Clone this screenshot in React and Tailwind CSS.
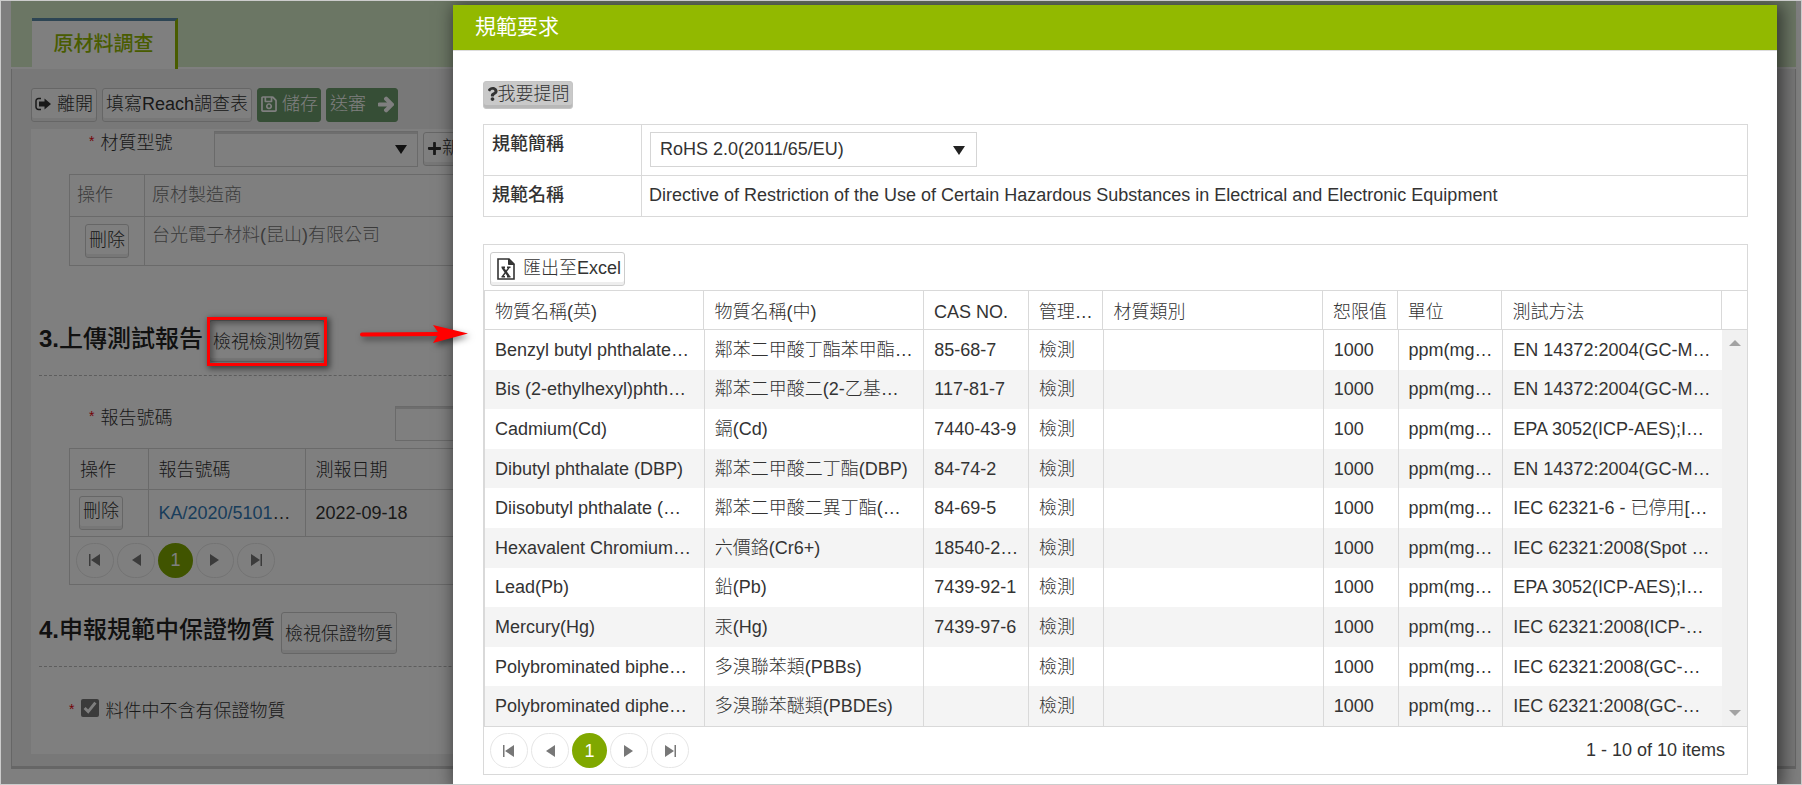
import React from "react";
import clsx from "clsx";
import { FaArrowRight, FaPlus, FaQuestion, FaRegSave } from "react-icons/fa";

const substances = [
  ["Benzyl butyl phthalate…", "鄰苯二甲酸丁酯苯甲酯…", "85-68-7", "檢測", "", "1000", "ppm(mg…", "EN 14372:2004(GC-M…"],
  ["Bis (2-ethylhexyl)phth…", "鄰苯二甲酸二(2-乙基…", "117-81-7", "檢測", "", "1000", "ppm(mg…", "EN 14372:2004(GC-M…"],
  ["Cadmium(Cd)", "鎘(Cd)", "7440-43-9", "檢測", "", "100", "ppm(mg…", "EPA 3052(ICP-AES);I…"],
  ["Dibutyl phthalate (DBP)", "鄰苯二甲酸二丁酯(DBP)", "84-74-2", "檢測", "", "1000", "ppm(mg…", "EN 14372:2004(GC-M…"],
  ["Diisobutyl phthalate (…", "鄰苯二甲酸二異丁酯(…", "84-69-5", "檢測", "", "1000", "ppm(mg…", "IEC 62321-6 - 已停用[…"],
  ["Hexavalent Chromium…", "六價鉻(Cr6+)", "18540-2…", "檢測", "", "1000", "ppm(mg…", "IEC 62321:2008(Spot …"],
  ["Lead(Pb)", "鉛(Pb)", "7439-92-1", "檢測", "", "1000", "ppm(mg…", "EPA 3052(ICP-AES);I…"],
  ["Mercury(Hg)", "汞(Hg)", "7439-97-6", "檢測", "", "1000", "ppm(mg…", "IEC 62321:2008(ICP-…"],
  ["Polybrominated biphe…", "多溴聯苯類(PBBs)", "", "檢測", "", "1000", "ppm(mg…", "IEC 62321:2008(GC-…"],
  ["Polybrominated diphe…", "多溴聯苯醚類(PBDEs)", "", "檢測", "", "1000", "ppm(mg…", "IEC 62321:2008(GC-…"],
];

const headers = ["物質名稱(英)", "物質名稱(中)", "CAS NO.", "管理…", "材質類別", "恕限值", "單位", "測試方法"];

// minimum widths, the fixed table layout scales them up in proportion
const GridColumns = () => (
  <colgroup>
    <col className="w-[88px]" />
    <col className="w-[88px]" />
    <col className="w-[42px]" />
    <col className="w-[30px]" />
    <col className="w-[88px]" />
    <col className="w-[30px]" />
    <col className="w-[42px]" />
    <col className="w-[88px]" />
  </colgroup>
);

const Button = ({ className, children, ...props }) => (
  <button
    type="button"
    className={clsx(
      "flex shrink-0 items-center whitespace-nowrap rounded-[3px] border leading-6",
      className
    )}
    {...props}
  >
    {children}
  </button>
);

const plain = "border-[#ccc] bg-white shadow-[inset_0_-3px_0_#eee]";
const green = "border-[#6c9c6c] bg-[#6c9c6c] text-white";

const DownTriangle = ({ className }) => (
  <svg viewBox="0 0 12 9" className={clsx("pointer-events-none absolute h-[9px] w-3", className)}>
    <path d="M0 0h12L6 9z" fill="#222" />
  </svg>
);

const SignOutIcon = () => (
  <svg viewBox="0 0 16 14" className="h-[14px] w-4">
    <path d="M6 1.500H3.500a2.500 2.500 0 0 0-2.500 2.500v6a2.500 2.500 0 0 0 2.500 2.500H6" fill="none" stroke="#333" strokeWidth="1.5" />
    <path d="M4 4.500h5.500V1.500L16 7l-6.500 5.500V9.500H4z" fill="#333" />
  </svg>
);

const ExcelIcon = () => (
  <svg viewBox="0 0 18 22" className="h-[22px] w-[18px]">
    <path d="M1 1h11l5 5v15H1z" fill="none" stroke="#333" strokeWidth="1.6" />
    <path d="M11.500 1v5.500H17z" fill="#333" stroke="#333" />
    <path d="M5.500 9.500l6.500 9" stroke="#333" strokeWidth="2.2" />
    <path d="M12 9.500l-6.500 9" stroke="#333" strokeWidth="1.4" />
    <path d="M4.500 9.300H8M10 9.300h3.500M4.500 18.700H8M10 18.700h3.500" stroke="#333" strokeWidth="1.4" />
  </svg>
);

const pagerButtons = [
  { label: "第一頁", d: "M0 0h1.500v12H0zM11 0v12L2 6z" },
  { label: "上一頁", d: "M11 0v12L2 6z" },
  { label: "1" },
  { label: "下一頁", d: "M1 0v12l9-6z" },
  { label: "最後一頁", d: "M1 0v12l9-6zM10.500 0H12v12h-1.500z" },
];

const Pager = () => (
  <div className="flex items-center gap-[3px]">
    {pagerButtons.map(({ label, d }) =>
      d ? (
        <button
          key={label}
          type="button"
          aria-label={label}
          className="flex h-[35px] w-[38px] items-center justify-center rounded-full border border-[#e6e6e6] bg-white"
        >
          <svg viewBox="0 0 12 12" className="h-3 w-3">
            <path d={d} fill="#777" />
          </svg>
        </button>
      ) : (
        <button key={label} type="button" className="h-[35px] w-[35px] rounded-full bg-[#80a800] text-white">
          {label}
        </button>
      )
    )}
  </div>
);

const Label = ({ htmlFor, children }) => (
  <label htmlFor={htmlFor} className="flex gap-[6px] leading-6">
    <span className="text-sm leading-5 text-red-600">*</span>
    {children}
  </label>
);

const SectionTitle = ({ number, children }) => (
  <h2 className="text-2xl font-medium leading-9 text-[#222]">
    <span className="font-bold">{number}.</span>
    {children}
  </h2>
);

const SurveyPage = () => (
  <div className="h-full bg-white pl-[10px] pr-[5px]">
    <div className="h-[68px] border-b-2 border-white bg-[#d6ecc8] pl-[21px] pt-[17px]">
      <a
        href="#material"
        className="flex h-[51px] w-[146px] items-center justify-center border-r-[3px] border-t-[3px] border-r-[#92b900] border-t-[#5b8aa8] bg-white pb-[2px] text-xl font-medium text-[#92b900]"
      >
        原材料調查
      </a>
    </div>

    <div className="border-x border-b-[3px] border-[#ccc] bg-[#f0f0f0] pb-3 pl-[19px] pr-5 pt-[19px]">
      <div className="flex gap-[5px]">
        <Button className={clsx(plain, "h-[34px] w-[66px] justify-center gap-[6px] pb-[2px]")}>
          <SignOutIcon />
          離開
        </Button>
        <Button className={clsx(plain, "h-[34px] w-[150px] justify-center pb-[2px]")}>填寫Reach調查表</Button>
        <Button className={clsx(green, "h-[34px] w-16 justify-center gap-1 pb-[2px]")}>
          <FaRegSave className="h-[18px] w-[18px]" />
          儲存
        </Button>
        <Button className={clsx(green, "h-[34px] w-[72px] justify-center gap-3 pb-[2px]")}>
          送審
          <FaArrowRight className="h-[17px] w-4" stroke="currentColor" strokeWidth="45" />
        </Button>
      </div>

      <div className="mt-[7px] h-[625px] bg-white pl-2">
        <div className="flex pl-[50px] pt-[2px]">
          <div className="w-[125px]">
            <Label htmlFor="model">材質型號</Label>
          </div>
          <div className="relative mr-[5px]">
            <select
              id="model"
              className="h-9 w-[204px] appearance-none border border-[#d5d5d5] bg-white shadow-[inset_0_2px_0_#ddd]"
            />
            <DownTriangle className="right-[11px] top-[14px]" />
          </div>
          <Button className={clsx(plain, "mt-px h-[34px] w-[60px] pb-[2px] pl-[3px]")}>
            <FaPlus className="h-[15px] w-[15px]" />
            新增
          </Button>
        </div>

        <table className="ml-[30px] mt-[7px] w-[1600px] table-fixed border-collapse text-left text-[#777]">
          <colgroup>
            <col className="w-[75px]" />
            <col />
          </colgroup>
          <thead>
            <tr className="h-[42px]">
              <th className="border border-[#d5d5d5] pb-[2px] pl-[7px] font-light">操作</th>
              <th className="border border-[#d5d5d5] pb-[2px] pl-[7px] font-light">原材製造商</th>
            </tr>
          </thead>
          <tbody>
            <tr className="h-[49px]">
              <td className="border border-[#d5d5d5] pl-[15px]">
                <Button className={clsx(plain, "h-[34px] w-11 justify-center pb-[3px] text-[#333]")}>刪除</Button>
              </td>
              <td className="border border-[#d5d5d5] pb-3 pl-[7px]">台光電子材料(昆山)有限公司</td>
            </tr>
          </tbody>
        </table>

        <section className="mt-[51px]">
          <div className="flex h-[59px] gap-[6px] border-b border-dashed border-[#bbb]">
            <div className="pt-1">
              <SectionTitle number={3}>上傳測試報告</SectionTitle>
            </div>
            <Button className={clsx(plain, "mt-[3px] h-[42px] w-[116px] justify-center pt-[2px]")}>檢視檢測物質</Button>
          </div>
          <div className="flex pl-[50px] pt-[30px]">
            <div className="w-[306px]">
              <Label htmlFor="report">報告號碼</Label>
            </div>
            <input id="report" className="h-[35px] w-[300px] border border-[#d5d5d5] shadow-[inset_0_2px_0_#ddd]" />
          </div>
          <div className="ml-[30px] mt-[7px] w-[1600px] border border-[#d5d5d5]">
            <table className="w-full table-fixed border-collapse text-left">
              <colgroup>
                <col className="w-[78px]" />
                <col className="w-[157px]" />
                <col />
              </colgroup>
              <thead>
                <tr className="h-10 border-b border-[#d5d5d5]">
                  <th className="border-r border-[#d5d5d5] pl-[10px] pt-[2px] font-light">操作</th>
                  <th className="border-r border-[#d5d5d5] pl-[10px] pt-[2px] font-light">報告號碼</th>
                  <th className="pl-[10px] pt-[2px] font-light">測報日期</th>
                </tr>
              </thead>
              <tbody>
                <tr className="h-[47px] border-b border-[#d5d5d5]">
                  <td className="border-r border-[#d5d5d5] pl-[9px]">
                    <Button className={clsx(plain, "h-[34px] w-11 justify-center pb-[3px]")}>刪除</Button>
                  </td>
                  <td className="border-r border-[#d5d5d5] pl-[10px]">
                    <a href="#report-file" className="text-[#337ab7]">
                      KA/2020/5101
                    </a>
                    …
                  </td>
                  <td className="pl-[10px]">2022-09-18</td>
                </tr>
              </tbody>
            </table>
            <div className="py-[6px] pl-[6px]">
              <Pager />
            </div>
          </div>
        </section>

        <section className="mt-[27px]">
          <div className="flex h-[55px] gap-[6px] border-b border-dashed border-[#bbb]">
            <SectionTitle number={4}>申報規範中保證物質</SectionTitle>
            <Button className={clsx(plain, "h-[42px] w-[116px] justify-center pt-[2px]")}>檢視保證物質</Button>
          </div>
          <div className="flex items-start pl-[30px] pt-8">
            <span className="mr-[7px] text-sm leading-5 text-red-600">*</span>
            <input id="none" type="checkbox" defaultChecked className="mr-[6px] h-[18px] w-[18px] accent-[#767676]" />
            <label htmlFor="none" className="leading-6">
              料件中不含有保證物質
            </label>
          </div>
        </section>
      </div>
    </div>
  </div>
);

const SpecDialog = () => (
  <div
    role="dialog"
    aria-labelledby="spec-title"
    className="min-w-0 flex-1 bg-white shadow-[3px_3px_16px_3px_rgba(0,0,0,0.5)]"
  >
    <div
      id="spec-title"
      className="flex h-[46px] items-center border-b border-[#ddd] bg-[#92b900] pb-[2px] pl-[22px] text-[21px] font-normal text-white"
    >
      規範要求
    </div>

    <div className="pb-[10px] pl-[30px] pr-[29px] pt-[30px]">
      <Button className="h-7 w-[90px] justify-center border-[#c5c5c5] bg-[#c9c9c9] pb-[3px] shadow-[inset_0_-3px_0_#b8b8b8]">
        <FaQuestion className="h-[14px] w-[11px]" />
        我要提問
      </Button>

      <table className="mt-[15px] w-full table-fixed border-collapse text-left">
        <colgroup>
          <col className="w-[158px]" />
          <col />
        </colgroup>
        <tbody>
          <tr className="h-[51px]">
            <th className="border border-[#d9d9d9] pl-2 pt-[7px] align-top font-medium leading-6">
              <label htmlFor="spec">規範簡稱</label>
            </th>
            <td className="border border-[#d9d9d9] pb-[2px] pl-2">
              <div className="relative w-[327px]">
                <select
                  id="spec"
                  className="block h-[35px] w-full appearance-none border border-[#d5d5d5] bg-white pl-[9px]"
                >
                  <option>RoHS 2.0(2011/65/EU)</option>
                </select>
                <DownTriangle className="right-3 top-[14px]" />
              </div>
            </td>
          </tr>
          <tr className="h-[41px]">
            <th className="border border-[#d9d9d9] pl-2 pt-[7px] align-top font-medium leading-6">規範名稱</th>
            <td className="border border-[#d9d9d9] pb-[2px] pl-[7px]">
              Directive of Restriction of the Use of Certain Hazardous Substances in Electrical and Electronic Equipment
            </td>
          </tr>
        </tbody>
      </table>

      <div className="mt-[27px] border border-[#d9d9d9]">
        <div className="h-[45px] pl-[6px] pt-[7px]">
          <Button className={clsx(plain, "h-[34px] w-[135px] gap-2 pl-[6px]")}>
            <ExcelIcon />
            <span className="pb-[2px]">匯出至Excel</span>
          </Button>
        </div>

        <div className="border-y border-[#d9d9d9] pr-[25px]">
          <table className="w-full table-fixed border-collapse text-left">
            <GridColumns />
            <thead>
              <tr className="h-[38px]">
                {headers.map((text) => (
                  <th key={text} className="overflow-hidden whitespace-nowrap border-x border-[#d9d9d9] pl-[10px] pt-1 font-light">
                    {text}
                  </th>
                ))}
              </tr>
            </thead>
          </table>
        </div>

        <div className="flex border-b border-[#d9d9d9]">
          <div className="min-w-0 flex-1">
            <table className="h-[396px] w-full table-fixed border-separate border-spacing-0 text-left">
              <GridColumns />
              <tbody>
                {substances.map((row) => (
                  <tr key={row[0]} className="even:bg-[#f4f4f4]">
                    {row.map((cell, i) => (
                      <td key={i} className="overflow-hidden whitespace-nowrap border-l border-[#d9d9d9] pl-[10px]">
                        {cell}
                      </td>
                    ))}
                  </tr>
                ))}
              </tbody>
            </table>
          </div>
          <div className="flex w-[25px] flex-col items-center justify-between bg-[#f1f1f1] py-[10px]">
            <svg viewBox="0 0 12 6" className="h-[6px] w-3">
              <path d="M6 0l6 6H0z" fill="#a3a3a3" />
            </svg>
            <svg viewBox="0 0 12 6" className="h-[6px] w-3">
              <path d="M0 0h12L6 6z" fill="#a3a3a3" />
            </svg>
          </div>
        </div>

        <div className="flex items-center justify-between py-[6px] pl-[6px] pr-[22px]">
          <Pager />
          <span className="pb-[2px]">1 - 10 of 10 items</span>
        </div>
      </div>
    </div>
  </div>
);

export default function App() {
  return (
    <div className="relative h-screen overflow-hidden border border-[#ccc] font-['Liberation_Sans','Noto_Sans_CJK_TC',sans-serif] text-lg font-light leading-6 text-[#333]">
      <SurveyPage />

      <div className="absolute inset-0 flex bg-black/50 pl-[452px] pr-6 pt-1">
        <SpecDialog />
      </div>

      {/* callout drawn over the dimmed page */}
      <div className="pointer-events-none absolute left-[206px] top-[316px] h-[49px] w-[120px] border-[3px] border-[#f00] shadow-[2px_2px_6px_1px_rgba(0,0,0,0.5),inset_2px_2px_6px_1px_rgba(0,0,0,0.4)]" />
      <svg
        viewBox="0 0 112 24"
        className="pointer-events-none absolute left-[357px] top-[321px] h-6 w-28 overflow-visible drop-shadow-[2px_3px_3px_rgba(0,0,0,0.5)]"
      >
        <path d="M4 12.500L82 12" stroke="#f00" strokeWidth="4" strokeLinecap="round" />
        <path d="M75 3l35 8.500-35 9.500 6-9.500z" fill="#f00" />
      </svg>
    </div>
  );
}
